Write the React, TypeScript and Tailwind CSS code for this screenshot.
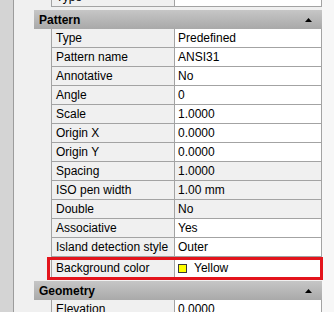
import React from 'react'

type Row = { label: string; value: string; gray?: boolean }

const pattern: Row[] = [
  { label: 'Type', value: 'Predefined' },
  { label: 'Pattern name', value: 'ANSI31' },
  { label: 'Annotative', value: 'No' },
  { label: 'Angle', value: '0' },
  { label: 'Scale', value: '1.0000' },
  { label: 'Origin X', value: '0.0000' },
  { label: 'Origin Y', value: '0.0000' },
  { label: 'Spacing', value: '1.0000', gray: true },
  { label: 'ISO pen width', value: '1.00 mm', gray: true },
  { label: 'Double', value: 'No', gray: true },
  { label: 'Associative', value: 'Yes' },
  { label: 'Island detection style', value: 'Outer' },
]

function PropRow({ label, value, gray }: Row) {
  return (
    <div className="ml-[17px] flex h-[19px] border-b border-[#a3a3a3]">
      <div className="w-[124px] shrink-0 border-l border-r border-[#a3a3a3] bg-[#f0f0f0] pl-[4px] leading-[18px] whitespace-nowrap overflow-hidden">
        {label}
      </div>
      <div className={`flex-1 border-r border-[#a3a3a3] pl-[3px] leading-[18px] ${gray ? 'bg-[#f0f0f0]' : 'bg-white'}`}>
        {value}
      </div>
    </div>
  )
}

function Header({ title }: { title: string }) {
  return (
    <div className="flex h-[19px] items-center justify-between bg-linear-to-b from-[#c6c6c6] to-[#a9a9a9] pl-[5px] pr-[10px]">
      <span className="font-bold">{title}</span>
      <svg width="7" height="4" viewBox="0 0 7 4">
        <polygon points="3.5,0 7,4 0,4" fill="#000" />
      </svg>
    </div>
  )
}

export default function App() {
  return (
    <div className="flex h-[312px] w-[334px] overflow-hidden bg-white font-['Liberation_Sans',Arial,sans-serif] text-[12px] text-black">
      <div className="w-[14px] shrink-0 border-r border-[#9c9c9c] bg-[#d4d4d4]" />
      <div className="w-[308px] shrink-0 bg-[#f0f0f0] pl-[20px]">
        <div className="-mt-[12px]">
          <PropRow label="Type" value="" />
        </div>
        <div className="mt-[3px]">
          <Header title="Pattern" />
        </div>
        {pattern.map(r => (
          <PropRow key={r.label} {...r} />
        ))}
        <div className="relative z-10 ml-[13px] h-[23px] w-[276px] border-[3px] border-[#e3141c]">
          <div className="ml-[1px] flex h-full">
            <div className="w-[124px] shrink-0 border-l border-r border-[#a3a3a3] bg-[#f0f0f0] pl-[4px] leading-[17px]">
              Background color
            </div>
            <div className="flex flex-1 items-center gap-[7px] bg-white pl-[3px]">
              <span className="h-[9px] w-[9px] border border-[#3a3a3a] bg-[#ffff00]" />
              <span className="leading-[17px]">Yellow</span>
            </div>
          </div>
        </div>
        <div className="mt-[1px]">
          <Header title="Geometry" />
        </div>
        <PropRow label="Elevation" value="0.0000" />
      </div>
      <div className="flex-1 bg-[#f7f7f7]" />
    </div>
  )
}
